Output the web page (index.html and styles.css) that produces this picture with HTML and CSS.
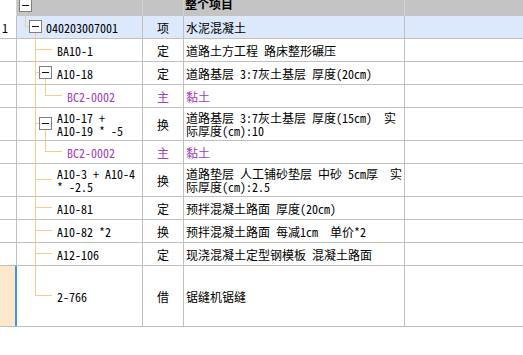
FILE: index.html
```html
<!DOCTYPE html>
<html>
<head>
<meta charset="utf-8">
<link rel="stylesheet" href="styles.css">
</head>
<body>
<div class="sheet">
  <div class="hdr">
    <div class="hc hc1"></div>
    <div class="hc tree"><span class="box broot"></span><span class="ln v0 hv"></span></div>
    <div class="hc"></div>
    <div class="hc htitle"><span>整个项目</span></div>
    <div class="hc"></div>
  </div>
  <div class="body">
    <div class="c num">1</div>
    <div class="c tree sel"><span class="ln v0 upper"></span><span class="ln h0"></span><span class="box b0"></span><span class="ln v1 lower1"></span><div class="txt l0">040203007001</div></div>
    <div class="c typ sel">项</div>
    <div class="c nm sel">水泥混凝土</div>
    <div class="c sel"></div>

    <div class="c num"></div>
    <div class="c tree"><span class="ln v1 full"></span><span class="ln h1"></span><div class="txt l1">BA10-1</div></div>
    <div class="c typ">定</div>
    <div class="c nm">道路土方工程 路床整形碾压</div>
    <div class="c"></div>

    <div class="c num"></div>
    <div class="c tree"><span class="ln v1 full"></span><span class="ln h1b"></span><span class="box b1"></span><span class="ln v2 lower1"></span><div class="txt l1">A10-18</div></div>
    <div class="c typ">定</div>
    <div class="c nm">道路基层 3:7灰土基层 厚度(20cm)</div>
    <div class="c"></div>

    <div class="c num"></div>
    <div class="c tree sub"><span class="ln v1 full"></span><span class="ln v2 upper"></span><span class="ln h2"></span><div class="txt l2">BC2-0002</div></div>
    <div class="c typ sub">主</div>
    <div class="c nm sub">黏土</div>
    <div class="c"></div>

    <div class="c num"></div>
    <div class="c tree"><span class="ln v1 full"></span><span class="ln h1b"></span><span class="box b1"></span><span class="ln v2 lower1"></span><div class="txt l1">A10-17 +<br>A10-19 * -5</div></div>
    <div class="c typ">换</div>
    <div class="c nm">道路基层 3:7灰土基层 厚度(15cm)  实<br>际厚度(cm):10</div>
    <div class="c"></div>

    <div class="c num"></div>
    <div class="c tree sub"><span class="ln v1 full"></span><span class="ln v2 upper"></span><span class="ln h2"></span><div class="txt l2">BC2-0002</div></div>
    <div class="c typ sub">主</div>
    <div class="c nm sub">黏土</div>
    <div class="c"></div>

    <div class="c num"></div>
    <div class="c tree"><span class="ln v1 full"></span><span class="ln h1"></span><div class="txt l1">A10-3 + A10-4<br>* -2.5</div></div>
    <div class="c typ">换</div>
    <div class="c nm">道路垫层 人工铺砂垫层 中砂 5cm厚  实<br>际厚度(cm):2.5</div>
    <div class="c"></div>

    <div class="c num"></div>
    <div class="c tree"><span class="ln v1 full"></span><span class="ln h1"></span><div class="txt l1">A10-81</div></div>
    <div class="c typ">定</div>
    <div class="c nm">预拌混凝土路面 厚度(20cm)</div>
    <div class="c"></div>

    <div class="c num"></div>
    <div class="c tree"><span class="ln v1 full"></span><span class="ln h1"></span><div class="txt l1">A10-82 *2</div></div>
    <div class="c typ">换</div>
    <div class="c nm">预拌混凝土路面 每减1cm  单价*2</div>
    <div class="c"></div>

    <div class="c num"></div>
    <div class="c tree"><span class="ln v1 full"></span><span class="ln h1"></span><div class="txt l1">A12-106</div></div>
    <div class="c typ">定</div>
    <div class="c nm">现浇混凝土定型钢模板 混凝土路面</div>
    <div class="c"></div>

    <div class="c num cur"></div>
    <div class="c tree"><span class="ln v1 upper"></span><span class="ln h1"></span><div class="txt l1">2-766</div></div>
    <div class="c typ">借</div>
    <div class="c nm">锯缝机锯缝</div>
    <div class="c"></div>
  </div>
</div>
</body>
</html>
```
FILE: styles.css
```css
html, body {
  margin: 0;
  padding: 0;
  background: #ffffff;
}
.sheet {
  width: 523px;
  font-family: "Noto Sans Mono CJK SC", "Noto Sans CJK SC", "Liberation Mono", monospace;
  font-size: 12px;
  color: #000;
}
.hdr {
  display: grid;
  grid-template-columns: 16px 125px 40px 220px 1fr;
  column-gap: 1px;
  height: 16px;
  background: #d2d2d2;
}
.hc {
  background: #c4c4c4;
  overflow: hidden;
}
.hc1 {
  background: #fff;
}
.htitle {
  font-weight: bold;
  padding-left: 1px;
  line-height: 12px;
}
.htitle span {
  display: block;
  margin-top: -2px;
}
.body {
  display: grid;
  grid-template-columns: 16px 125px 40px 220px 1fr;
  grid-template-rows: 22px 22px 22px 22px 32px 22px 32px 22px 22px 22px 60px;
  gap: 1px;
  background: #c0c0c0;
  padding-bottom: 1px;
}
.c {
  background: #fff;
  display: flex;
  align-items: center;
  line-height: 13px;
  white-space: pre;
  overflow: visible;
}
.num {
  padding-left: 2px;
}
.cur {
  background: #fde8cb;
  box-shadow: inset -1px 0 0 #3b95f5, 1px 0 0 #3b95f5;
}
.sel {
  background: #dce8fc;
}
.typ {
  justify-content: center;
}
.nm {
  padding-left: 2px;
}
.sub {
  color: #a23cc4;
}
.tree {
  position: relative;
}
.txt {
  position: relative;
}
.l0 { padding-left: 29px; }
.l1 { padding-left: 40px; }
.l2 { padding-left: 50px; }

.ln {
  position: absolute;
  background: #fcc987;
}
.v0, .v1, .v2 { width: 1px; }
.v0 { left: 8px; }
.v1 { left: 18px; }
.v2 { left: 28px; }
.hv { top: 12px; bottom: 0; }
.full { top: 0; bottom: -1px; }
.upper { top: 0; height: 50%; }
.lower1 { top: calc(50% + 6px); bottom: -1px; }
.h0, .h1, .h1b, .h2 {
  height: 1px;
  top: calc(50% - 1px);
}
.h0 { left: 8px; width: 4px; }
.h1 { left: 18px; width: 17px; }
.h1b { left: 18px; width: 4px; }
.h2 { left: 28px; width: 17px; }

.box {
  position: absolute;
  width: 11px;
  height: 11px;
  border: 1px solid #808080;
  background: #fff;
  top: calc(50% - 7px);
}
.box::after {
  content: "";
  position: absolute;
  left: 2px;
  top: 5px;
  width: 7px;
  height: 1px;
  background: #111;
}
.broot { left: 2px; top: -1px; }
.b0 { left: 12px; }
.b1 { left: 22px; }
```
